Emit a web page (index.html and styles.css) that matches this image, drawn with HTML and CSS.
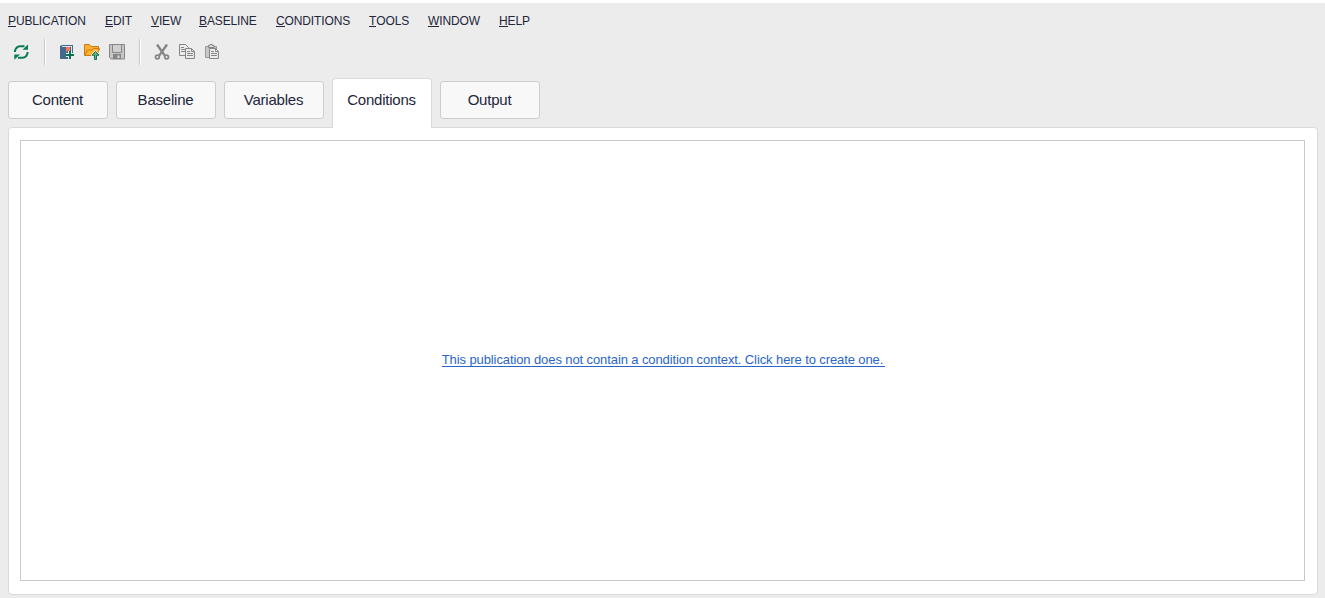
FILE: index.html
```html
<!DOCTYPE html>
<html lang="en">
<head>
<meta charset="UTF-8">
<meta name="viewport" content="width=device-width, initial-scale=1.0">
<title>Publication Manager</title>
<link rel="stylesheet" href="styles.css">
</head>
<body>
<nav class="menubar">
<span><u>P</u>UBLICATION</span>
<span><u>E</u>DIT</span>
<span><u>V</u>IEW</span>
<span><u>B</u>ASELINE</span>
<span><u>C</u>ONDITIONS</span>
<span><u>T</u>OOLS</span>
<span><u>W</u>INDOW</span>
<span><u>H</u>ELP</span>
</nav>
<div class="toolbar">
<svg class="icon" viewBox="0 0 16 16" fill="none" stroke="#087b58" stroke-width="2"><path d="M2 8V6.8Q3 2.6 7 2.2h4.5M14.5 8v1.2Q13.5 13.4 9.5 13.8H5"/><path d="M9.5 5.8h5.5V.6zM7 10.4H1.3v5.4z" fill="#087b58" stroke="none"/></svg>
<i class="sep"></i>
<svg class="icon" viewBox="0 0 16 16"><path d="M1 2l2-1h11v8h-1v6H1z" fill="#46678e"/><path d="M3 2h10v1H3z" fill="#dce3eb"/><path d="M12 3h1v5h-1z" fill="#dce3eb"/><path d="M7 3h4v5L9 6.5 7 8z" fill="#ff7652"/><path d="M9 7h4v2h2v4h-2v2H9v-2H7V9h2z" fill="#ececec"/><path d="M10 7h2v3h3v2h-3v3h-2v-3H7v-2h3z" fill="#08734f"/></svg>
<svg class="icon" viewBox="0 0 16 16"><path d="M.5 11.5V.5h5l1.5 2h7.5V5h1l-3 6.5z" fill="#ffb02e" stroke="#c47b16"/><path d="M1 11l2.5-5H8l1.5-1.5h6" fill="none" stroke="#c47b16"/><path d="M11.5 6L7 11v1h3v4h4v-4h2v-1z" fill="#ececec"/><path d="M11.5 7.5L8 11.2h2.5v4.3h2v-4.3H15z" fill="#65b77e" stroke="#08734f"/></svg>
<svg class="icon" viewBox="0 0 16 16"><path d="M.5.5h15v14.5H2L.5 13.5z" fill="#c5c5c5" stroke="#868686"/><path d="M3.5 1v7.5h9V1" fill="#d0d0d0" stroke="#868686"/><path d="M4 10h8v5H4z" fill="#868686"/><path d="M8.5 11.5h2V14h-2z" fill="#ddd"/></svg>
<i class="sep second"></i>
<svg class="icon" viewBox="0 0 16 16" fill="none" stroke="#858585"><path d="M3 .5l7.8 11.1M13 .5L5.2 11.6" stroke-width="2.4"/><circle cx="3.4" cy="13" r="1.9" stroke-width="1.7"/><circle cx="12.6" cy="13" r="1.9" stroke-width="1.7"/></svg>
<svg class="icon" viewBox="0 0 16 16" fill="#ececec" stroke="#858585"><path d="M.5.5h6l3 3v8h-9zM2 3.5h3M2 5.5h4M2 7.5h4"/><path d="M6.5 4.5h6l3 3v7h-9z"/><path d="M12.5 4.5v3h3M8 7.5h3M8 9.5h6M8 11.5h6" fill="none"/></svg>
<svg class="icon" viewBox="0 0 16 16"><path d="M1.5 2.5h11v11h-11z" fill="#c8c8c8" stroke="#999"/><path d="M4.5 3.5v-2h1.5v-1h2.5v1H10v2z" fill="#ddd" stroke="#858585"/><path d="M5.5 4.5h6l3 3v7h-9z" fill="#ececec" stroke="#858585"/><path d="M11.5 4.5v3h3M7 7.5h3M7 9.5h6M7 11.5h6" fill="none" stroke="#858585"/></svg>
</div>
<div class="tabs">
<button class="tab">Content</button>
<button class="tab">Baseline</button>
<button class="tab">Variables</button>
<button class="tab active">Conditions</button>
<button class="tab">Output</button>
</div>
<main class="panel">
<div class="context"><a class="create" href="#">This publication does not contain a condition context. Click here to create one.</a></div>
</main>
</body>
</html>
```
FILE: styles.css
```css
*{margin:0;padding:0;box-sizing:border-box;}
body{font-family:"Liberation Sans",Arial,sans-serif;background:#ececec;color:#22263a;height:100vh;border-top:3px solid #fff;padding:0 7px 3px 8px;display:flex;flex-direction:column;overflow:hidden;}
.menubar{display:grid;grid-template-columns:97px 46px 48px 77px 93px 59px 71px auto;height:36px;line-height:36px;font-size:12px;letter-spacing:-.12px;white-space:nowrap;}
.menubar u{text-decoration:none;display:inline-block;line-height:10px;border-bottom:1px solid #22263a;}
.toolbar{display:flex;align-items:center;height:26px;padding-left:5px;gap:9px;}
.icon{width:16px;height:16px;flex:none;}
.sep{width:2px;height:26px;background:#c8c8c8;border-right:1px solid #fff;margin:0 4px 0 6px;}
.sep.second{margin-left:5px;}
.tabs{display:flex;gap:8px;height:62px;padding-top:13px;align-items:flex-start;}
.tab{width:100px;height:38px;margin-top:3px;border:1px solid #cdcdcd;border-radius:3px;background:#f8f8f8;color:#22263a;font:15px "Liberation Sans",Arial,sans-serif;letter-spacing:-.22px;padding:0 1px 1px 0;}
.tab.active{height:50px;margin-top:0;background:#fff;border-color:#dadada;border-bottom:0;border-radius:4px 4px 0 0;padding-bottom:8px;position:relative;}
.panel{flex:1;background:#fff;border:1px solid #dadada;border-radius:4px;padding:12px 12px 13px 11px;display:flex;}
.context{flex:1;border:1px solid #c8c8c8;display:flex;align-items:center;justify-content:center;}
.create{font-size:13px;line-height:12px;letter-spacing:-.1px;color:#2a66c8;text-decoration:none;border-bottom:1px solid #2a66c8;white-space:nowrap;padding-right:2px;margin:0 0 1px 2px;}
```
